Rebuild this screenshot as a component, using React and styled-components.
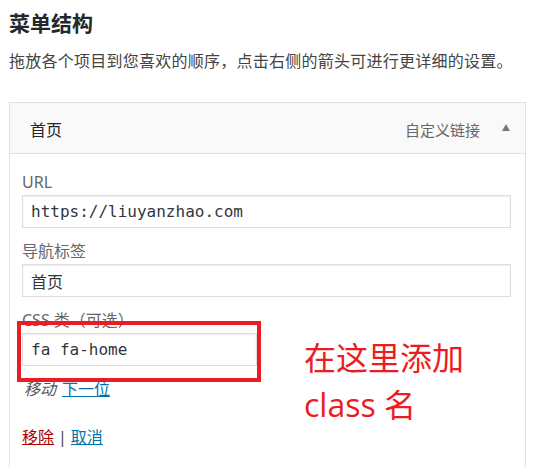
import React from "react";
import styled, { createGlobalStyle } from "styled-components";

const GlobalStyle = createGlobalStyle`
  body {
    margin: 0;
    background: #fff;
    font-family: "Noto Sans", "Noto Sans CJK SC", sans-serif;
    color: #444;
  }
`;

const Page = styled.div`
  position: relative;
  padding: 9px 0 0 9px;
  height: 458px;
  overflow: hidden;
`;

const Title = styled.h2`
  margin: 0;
  font-size: 21px;
  line-height: 28px;
  font-weight: 700;
  color: #23282d;
`;

const Desc = styled.p`
  margin: 12px 0 0;
  font-size: 16px;
  letter-spacing: 0.25px;
  line-height: 24px;
  color: #444;
`;

const Card = styled.div`
  margin-top: 29px;
  width: 517px;
  box-sizing: border-box;
  border: 1px solid #e2e2e2;
  border-bottom: none;
  background: #fff;
`;

const Header = styled.div`
  height: 51px;
  box-sizing: border-box;
  padding: 2px 15px 0 20px;
  display: flex;
  align-items: center;
  background: #f9f9f9;
  border-bottom: 1px solid #e2e2e2;
`;

const ItemTitle = styled.span`
  flex: 1;
  font-size: 16px;
  color: #23282d;
`;

const ItemType = styled.span`
  font-size: 15px;
  color: #666;
`;

const Arrow = styled.span`
  margin-left: 22px;
  width: 0;
  height: 0;
  border-left: 4px solid transparent;
  border-right: 4px solid transparent;
  border-bottom: 7px solid #72777c;
  margin-bottom: 3px;
`;

const Body = styled.div`
  padding: 18px 14px 40px 12px;
`;

const Field = styled.div`
  margin-bottom: 13px;
`;

const Label = styled.label`
  display: block;
  font-size: 16px;
  line-height: 20px;
  margin-bottom: 3px;
  color: #666;
`;

const Input = styled.div`
  height: 33px;
  width: ${(p) => (p.$narrow ? "235px" : "auto")};
  box-sizing: border-box;
  border: 1px solid #ddd;
  box-shadow: inset 0 1px 2px rgba(0, 0, 0, 0.07);
  padding: 0 8px;
  display: flex;
  align-items: center;
  font-size: 16px;
  color: #32373c;
  font-family: ${(p) =>
    p.$mono ? '"DejaVu Sans Mono", "Liberation Mono", monospace' : "inherit"};
`;

const MoveLine = styled.div`
  font-size: 16px;
  line-height: 20px;
  color: #555;
  padding-left: 2px;
`;

const Italic = styled.em`
  font-style: italic;
  margin-right: 6px;
`;

const Link = styled.a`
  color: ${(p) => (p.$danger ? "#a00" : "#0073aa")};
  text-decoration: underline;
  cursor: pointer;
`;

const Actions = styled.div`
  margin-top: 28px;
  font-size: 16px;
  line-height: 20px;
  color: #444;
`;

const Sep = styled.span`
  margin: 0 4px;
`;

const Frame = styled.div`
  position: absolute;
  left: 17px;
  top: 321px;
  width: 244px;
  height: 61px;
  box-sizing: border-box;
  border: 4px solid #ec1c24;
`;

const Note = styled.div`
  position: absolute;
  left: 304px;
  top: 334px;
  font-family: "Open Sans", "Noto Sans CJK SC", sans-serif;
  font-size: 32px;
  line-height: 47px;
  color: #ec1c24;
`;

export default function App() {
  return (
    <Page>
      <GlobalStyle />
      <Title>菜单结构</Title>
      <Desc>拖放各个项目到您喜欢的顺序，点击右侧的箭头可进行更详细的设置。</Desc>
      <Card>
        <Header>
          <ItemTitle>首页</ItemTitle>
          <ItemType>自定义链接</ItemType>
          <Arrow />
        </Header>
        <Body>
          <Field>
            <Label>URL</Label>
            <Input $mono>https://liuyanzhao.com</Input>
          </Field>
          <Field>
            <Label>导航标签</Label>
            <Input>首页</Input>
          </Field>
          <Field>
            <Label>CSS 类（可选）</Label>
            <Input $mono $narrow>fa fa-home</Input>
          </Field>
          <MoveLine>
            <Italic>移动</Italic>
            <Link>下一位</Link>
          </MoveLine>
          <Actions>
            <Link $danger>移除</Link>
            <Sep>|</Sep>
            <Link>取消</Link>
          </Actions>
        </Body>
      </Card>
      <Frame />
      <Note>
        在这里添加
        <br />
        class 名
      </Note>
    </Page>
  );
}
